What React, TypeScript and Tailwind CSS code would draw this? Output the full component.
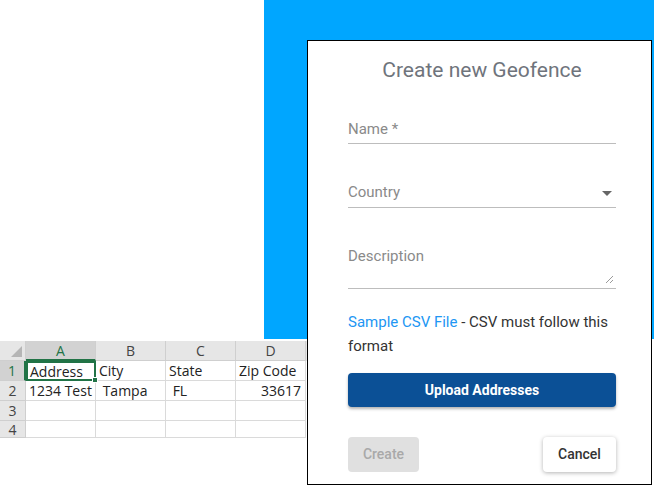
const columns = ["A", "B", "C", "D"];

const rows: { n: number; cells: string[] }[] = [
  { n: 1, cells: ["Address", "City", "State", "Zip Code"] },
  { n: 2, cells: ["1234 Test", "\u00a0Tampa", "\u00a0FL", "33617"] },
  { n: 3, cells: ["", "", "", ""] },
  { n: 4, cells: ["", "", "", ""] },
];

function Sheet() {
  return (
    <div className="w-[307px] font-['Open_Sans','Liberation_Sans',sans-serif] text-[14px] text-[#222]">
      <div className="flex h-[20px] bg-[#e6e6e6] text-[#444]">
        <div className="relative w-[26px] border-r border-b border-[#cfcfcf]">
          <div className="absolute right-[3px] bottom-[3px] h-0 w-0 border-b-[11px] border-l-[11px] border-b-[#b5b5b5] border-l-transparent" />
        </div>
        {columns.map((c, i) => (
          <div
            key={c}
            className={
              i === 0
                ? "flex w-[70px] items-center justify-center border-r border-b-2 border-r-[#cfcfcf] border-b-[#217346] bg-[#d2d2d2] text-[#217346]"
                : "flex w-[70px] items-center justify-center border-r border-b border-[#cfcfcf]"
            }
          >
            {c}
          </div>
        ))}
      </div>
      {rows.map((r) => (
        <div key={r.n} className="flex h-[20px] first:h-[21px] last:h-[17px]">
          <div
            className={
              r.n === 1
                ? "flex w-[26px] items-center justify-center border-r-2 border-b border-r-[#217346] border-b-[#cfcfcf] bg-[#d2d2d2] font-medium text-[#217346]"
                : "flex w-[26px] items-center justify-center border-r border-b border-[#cfcfcf] bg-[#e6e6e6] font-medium text-[#444]"
            }
          >
            {r.n}
          </div>
          {r.cells.map((v, i) => (
            <div
              key={i}
              className={
                r.n === 1 && i === 0
                  ? "relative flex w-[70px] items-center border-2 border-[#217346] pl-[2px] font-medium"
                  : i === 3 && r.n === 2
                    ? "flex w-[70px] items-center justify-end border-r border-b border-[#dadada] pr-[4px] font-medium"
                    : "flex w-[70px] items-center border-r border-b border-[#dadada] pl-[3px] font-medium"
              }
            >
              {v}
              {r.n === 1 && i === 0 && (
                <div className="absolute -right-[4px] -bottom-[4px] h-[6px] w-[6px] border border-white bg-[#217346]" />
              )}
            </div>
          ))}
        </div>
      ))}
    </div>
  );
}

function Field({ label, height, children }: { label: string; height: string; children?: React.ReactNode }) {
  return (
    <div className={`relative border-b border-[#bdbdbd] ${height}`}>
      <div className="text-[15px] leading-[20px] text-[#8a8a8a]">{label}</div>
      {children}
    </div>
  );
}

function Dialog() {
  return (
    <div className="absolute top-[40px] left-[307px] h-[445px] w-[345px] border border-black bg-white pt-[15px] pr-[35px] pl-[40px] font-['Roboto',sans-serif]">
      <h1 className="text-center text-[21px] leading-[28px] text-[#6f747c]">Create new Geofence</h1>
      <div className="mt-[35px]">
        <Field label="Name *" height="h-[25px]" />
      </div>
      <div className="mt-[38px]">
        <Field label="Country" height="h-[26px]">
          <div className="absolute top-[9px] right-[4px] h-0 w-0 border-x-[5px] border-t-[5px] border-x-transparent border-t-[#666]" />
        </Field>
      </div>
      <div className="mt-[38px]">
        <Field label="Description" height="h-[43px]">
          <svg className="absolute right-[2px] bottom-[4px]" width="9" height="9" viewBox="0 0 9 9">
            <path d="M8 1L1 8M8 5L5 8" stroke="#9a9a9a" strokeWidth="1" />
          </svg>
        </Field>
      </div>
      <p className="mt-[21px] text-[15px] leading-[24px] text-[#333]">
        <span className="text-[#2196f3]">Sample CSV File</span> - CSV must follow this format
      </p>
      <button
        type="button"
        className="mt-[15px] h-[34px] w-full rounded-[4px] bg-[#0b5096] text-[14px] font-bold text-white shadow-[0_2px_3px_rgba(0,0,0,0.3)]"
      >
        Upload Addresses
      </button>
      <div className="mt-[30px] flex justify-between">
        <button type="button" className="h-[35px] w-[71px] rounded-[4px] bg-[#e0e0e0] text-[14px] font-medium text-[#a9a9a9]">
          Create
        </button>
        <button
          type="button"
          className="h-[35px] w-[73px] rounded-[4px] bg-white text-[14px] font-medium text-[#333] shadow-[0_1px_4px_rgba(0,0,0,0.3)]"
        >
          Cancel
        </button>
      </div>
    </div>
  );
}

export default function App() {
  return (
    <div className="relative h-[486px] w-[654px] overflow-hidden bg-white">
      <div className="ml-[264px] h-[339px] bg-[#00a6ff]" />
      <div className="mt-[2px]">
        <Sheet />
      </div>
      <Dialog />
    </div>
  );
}
